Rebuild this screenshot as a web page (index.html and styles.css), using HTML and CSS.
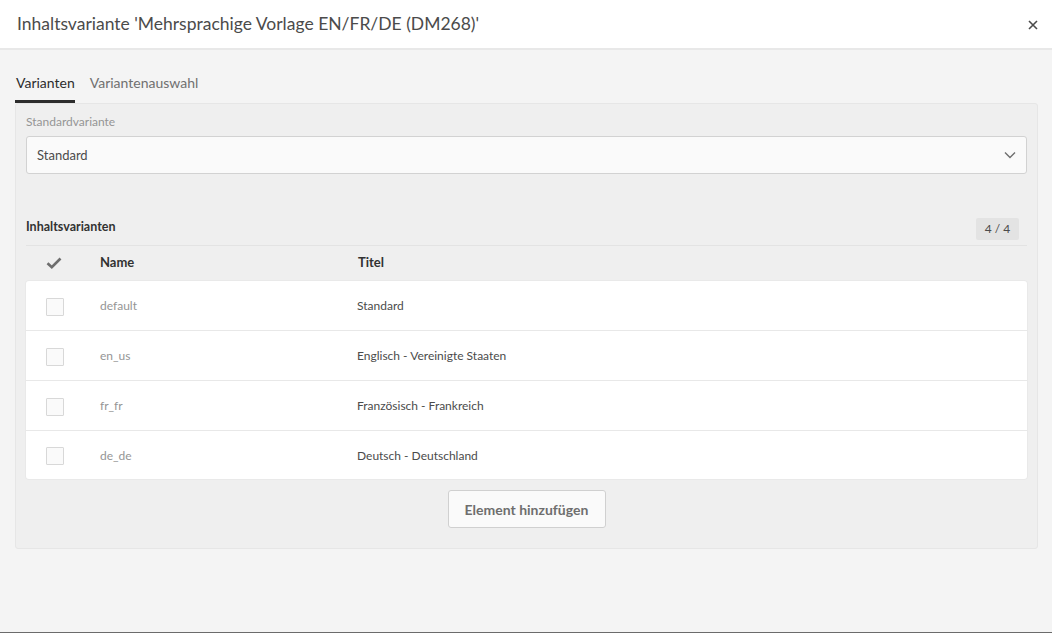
FILE: index.html
```html
<!DOCTYPE html>
<html lang="de">
<head>
<meta charset="utf-8">
<title>Inhaltsvariante</title>
<link rel="stylesheet" href="styles.css">
</head>
<body>
<div class="modal">
  <header class="modal-header">
    <h1 class="modal-title">Inhaltsvariante 'Mehrsprachige Vorlage EN/FR/DE (DM268)'</h1>
    <button class="close" aria-label="Schließen">
      <svg width="10" height="10" viewBox="0 0 10 10"><path d="M1 1L9 9M9 1L1 9" stroke="#4b4b4b" stroke-width="1.6" fill="none"/></svg>
    </button>
  </header>
  <div class="modal-body">
    <nav class="tabs">
      <span class="tab active">Varianten</span>
      <span class="tab">Variantenauswahl</span>
    </nav>
    <section class="panel">
      <label class="field-label">Standardvariante</label>
      <div class="select">
        <span>Standard</span>
        <svg width="12" height="8" viewBox="0 0 12 8"><path d="M1 1.5L6 6.5L11 1.5" stroke="#6e6e6e" stroke-width="1.4" fill="none"/></svg>
      </div>
      <div class="list-head">
        <span class="list-title">Inhaltsvarianten</span>
        <span class="badge">4 / 4</span>
      </div>
      <div class="table-head">
        <span class="col-check">
          <svg width="16" height="12" viewBox="0 0 16 12"><path d="M1.5 6.2L5.8 10.2L14.5 1.5" stroke="#6e6e6e" stroke-width="2.6" fill="none"/></svg>
        </span>
        <span class="col-name">Name</span>
        <span class="col-title">Titel</span>
      </div>
      <div class="table-body">
        <div class="row"><span class="col-check"><span class="cb"></span></span><span class="col-name">default</span><span class="col-title">Standard</span></div>
        <div class="row"><span class="col-check"><span class="cb"></span></span><span class="col-name">en_us</span><span class="col-title">Englisch - Vereinigte Staaten</span></div>
        <div class="row"><span class="col-check"><span class="cb"></span></span><span class="col-name">fr_fr</span><span class="col-title">Französisch - Frankreich</span></div>
        <div class="row"><span class="col-check"><span class="cb"></span></span><span class="col-name">de_de</span><span class="col-title">Deutsch - Deutschland</span></div>
      </div>
      <div class="actions">
        <button class="btn">Element hinzufügen</button>
      </div>
    </section>
  </div>
</div>
</body>
</html>
```

FILE: styles.css
```css
* { box-sizing: border-box; }
html, body { margin: 0; padding: 0; }
body {
  font-family: Lato, "Noto Sans", sans-serif;
  background: #f4f4f4;
  color: #4b4b4b;
}
.modal {
  height: 633px;
  border-bottom: 1px solid #6b6b6b;
  display: flex;
  flex-direction: column;
}
.modal-header {
  height: 50px;
  background: #fff;
  border-bottom: 2px solid #e8e8e8;
  display: flex;
  align-items: center;
  justify-content: space-between;
  padding: 0 14px 2px 17px;
  flex: none;
}
.modal-title {
  margin: 0;
  font-size: 17.5px;
  font-weight: 400;
  color: #4b4b4b;
}
.close {
  border: 0;
  background: none;
  padding: 0;
  width: 10px;
  height: 10px;
  display: flex;
  margin-top: 4px;
}
.modal-body {
  padding: 0 14px 0 15px;
}
.tabs {
  display: flex;
  gap: 15px;
  height: 53px;
  align-items: flex-end;
}
.tab {
  font-size: 14px;
  color: #707070;
  padding-bottom: 9px;
  border-bottom: 3px solid transparent;
  line-height: 16px;
}
.tab.active {
  color: #2c2c2c;
  border-bottom-color: #2c2c2c;
  padding-left: 1px;
}
.panel {
  background: #efefef;
  border: 1px solid #e6e6e6;
  border-radius: 3px;
  padding: 10px 10px 19px 10px;
  height: 446px;
  display: flex;
  flex-direction: column;
}
.field-label {
  font-size: 12px;
  color: #959595;
  line-height: 16px;
  margin-bottom: 6px;
}
.select {
  height: 38px;
  background: #fafafa;
  border: 1px solid #d2d2d2;
  border-radius: 3px;
  display: flex;
  align-items: center;
  justify-content: space-between;
  padding: 0 10px 0 10px;
  font-size: 13px;
  color: #4b4b4b;
}
.list-head {
  margin-top: 43px;
  height: 23px;
  display: flex;
  align-items: center;
  justify-content: space-between;
  padding-right: 8px;
}
.list-title {
  font-size: 12.5px;
  font-weight: 700;
  color: #323232;
  padding-bottom: 5px;
}
.badge {
  background: #e3e3e3;
  border-radius: 2px;
  width: 43px;
  height: 22px;
  display: flex;
  align-items: center;
  justify-content: center;
  font-size: 12px;
  color: #4b4b4b;
}
.table-head {
  margin-top: 5px;
  border-top: 1px solid #e3e3e3;
  height: 36px;
  padding-bottom: 4px;
  display: flex;
  align-items: center;
  font-size: 13px;
  font-weight: 700;
  color: #323232;
}
.col-check {
  width: 74px;
  padding-left: 20px;
  display: flex;
  align-items: center;
}
.table-head .col-check { padding-left: 20px; padding-top: 2px; }
.col-name { width: 257px; }
.table-head .col-title { margin-left: 1px; }
.table-body .col-name { color: #959595; }
.table-body {
  background: #fff;
  border-radius: 3px;
  box-shadow: 0 0 0 1px #e9e9e9;
}
.row {
  height: 50px;
  display: flex;
  align-items: center;
  font-size: 12px;
  color: #4b4b4b;
  border-top: 1px solid #e8e8e8;
}
.row:first-child { border-top: 0; height: 49px; }
.row:last-child { height: 49px; }
.cb {
  width: 18px;
  height: 18px;
  border: 1px solid #d8d8d8;
  background: #fafafa;
  border-radius: 1px;
  margin-top: 2px;
}
.actions {
  display: flex;
  justify-content: center;
  margin-top: 11px;
}
.btn {
  font-family: inherit;
  height: 38px;
  width: 158px;
  background: #fafafa;
  border: 1px solid #d0d0d0;
  border-radius: 3px;
  font-size: 14px;
  font-weight: 700;
  color: #6e6e6e;
}
```
